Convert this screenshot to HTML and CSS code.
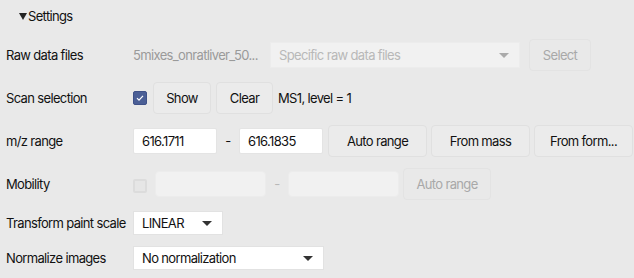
FILE: index.html
```html
<!DOCTYPE html>
<html lang="en">
<head>
  <meta charset="utf-8" />
  <title>Settings</title>
  <link rel="stylesheet" href="styles.css">
</head>
<body>
<div class="pane">
  <div class="title"><i class="arrow"></i>Settings</div>

  <div class="form">
    <div class="lbl">Raw data files</div>
    <div class="row">
      <span class="files">5mixes_onratliver_50...</span>
      <div class="combo off w-raw"><span>Specific raw data files</span><i class="caret"></i></div>
      <button class="btn off w-sel">Select</button>
    </div>

    <div class="lbl">Scan selection</div>
    <div class="row">
      <span class="chk on"><svg width="10" height="10" viewBox="0 0 10 10"><path d="M2 5.2l2 2 4-4.4" fill="none" stroke="#fff" stroke-width="1.2"/></svg></span>
      <button class="btn w-show">Show</button>
      <button class="btn w-clear">Clear</button>
      <span class="txt">MS1, level = 1</span>
    </div>

    <div class="lbl">m/z range</div>
    <div class="row">
      <input class="field w-mz" value="616.1711">
      <span class="dash">-</span>
      <input class="field w-mz" value="616.1835">
      <button class="btn w-big">Auto range</button>
      <button class="btn w-big">From mass</button>
      <button class="btn w-big">From form...</button>
    </div>

    <div class="lbl">Mobility</div>
    <div class="row">
      <span class="chk off"></span>
      <input class="field off w-mob" disabled>
      <span class="dash off">-</span>
      <input class="field off w-mob" disabled>
      <button class="btn off w-auto">Auto range</button>
    </div>

    <div class="lbl">Transform paint scale</div>
    <div class="row">
      <div class="combo w-lin"><span>LINEAR</span><i class="caret"></i></div>
    </div>

    <div class="lbl">Normalize images</div>
    <div class="row">
      <div class="combo w-norm"><span>No normalization</span><i class="caret"></i></div>
    </div>
  </div>
</div>
</body>
</html>
```

FILE: styles.css
```css
html,body{margin:0;height:100%;background:#e9e9e9;font-family:Inter,"Noto Sans",sans-serif;font-size:13px;
          letter-spacing:-0.65px;color:#111}
.pane{padding:6px 0 0 6px}
.title{height:20px;line-height:20px;padding-left:13px;display:flex;align-items:center}
.arrow{width:0;height:0;border-left:4px solid transparent;border-right:4px solid transparent;
       border-top:7px solid #222;margin-right:1px}

.form{display:grid;grid-template-columns:127px auto;row-gap:11px;align-items:center;margin-top:13px}
.lbl{white-space:nowrap}
.row{display:flex;align-items:center;height:32px}
.row:nth-child(10),.row:nth-child(12){height:24px}

.files{color:#9a9a9a;width:137px;white-space:nowrap}
.txt{margin-left:5px}
.dash{width:22px;text-align:center}
.dash.off{color:#b8b8b8}

.btn{height:32px;box-sizing:border-box;border:1px solid #e0e0e0;border-radius:4px;background:#ebebeb;
     font:inherit;letter-spacing:inherit;color:#111;padding:0;margin-left:4px;white-space:nowrap}
.btn.off{color:#a8a8a8;background:#e9e9e9;border-color:#e3e3e3}
.w-sel{width:62px;margin-left:9px}
.w-show{width:58px;margin-left:6px}
.w-clear{width:57px;margin-left:5px}
.w-big{width:99px}
.w-big:first-of-type{margin-left:5px}
.w-auto{width:88px}

.field{height:26px;box-sizing:border-box;border:1px solid #e4e4e4;border-radius:2px;background:#fff;
       font:inherit;letter-spacing:inherit;color:#111;padding:0 8px;margin:0}
.field.off{background:#f1f1f1;border-color:#ececec;border-radius:4px}
.w-mz{width:84px}
.w-mob{width:111px}
.chk+.w-mob{margin-left:8px}

.chk{width:14px;height:14px;box-sizing:border-box;border-radius:2px;display:flex;align-items:center;justify-content:center}
.chk.on{background:#4b5f96;border:1px solid #3f5188}
.chk.off{background:#e6e6e6;border:2px solid #dcdcdc;margin-top:4px}

.combo{height:24px;box-sizing:border-box;background:#fff;border:1px solid #e2e2e2;display:flex;align-items:center;
       justify-content:space-between;padding:0 10px 0 8px;white-space:nowrap}
.combo.off{background:#f1f1f1;border-color:#ececec;color:#b8b8b8;height:26px}
.w-raw{width:250px}
.w-lin{width:90px}
.w-norm{width:191px}
.caret{width:0;height:0;border-left:5px solid transparent;border-right:5px solid transparent;border-top:5px solid #333}
.combo.off .caret{border-top-color:#aaa}
```
